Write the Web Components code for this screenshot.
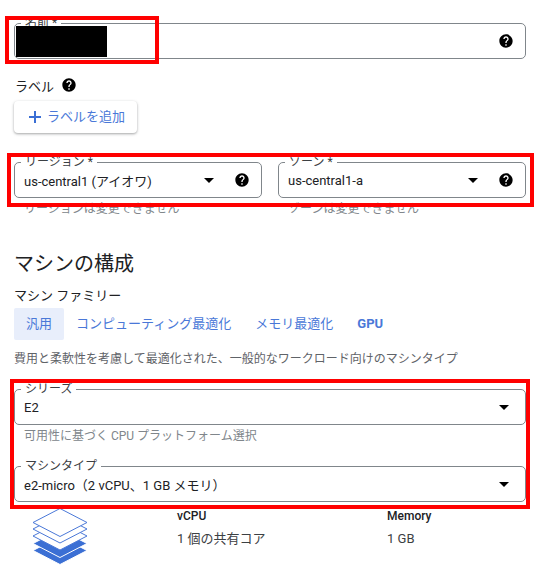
<!DOCTYPE html>
<html lang="ja">
<head>
<meta charset="utf-8">
<style>
  html, body { margin: 0; background: #fff; }
  body { font-family: Roboto, "Noto Sans CJK JP", sans-serif; color: #202124; }
</style>
</head>
<body>
<machine-form>
  <form-field label="名前 *" help></form-field>

  <form-label slot="labels" help>ラベル</form-label>
  <add-button slot="labels">ラベルを追加</add-button>

  <form-field slot="region" label="リージョン *" value="us-central1 (アイオワ)" arrow help hint="リージョンは変更できません"></form-field>
  <form-field slot="region" label="ゾーン *" value="us-central1-a" arrow help hint="ゾーンは変更できません"></form-field>

  <family-tabs slot="machine"></family-tabs>

  <form-field slot="series" label="シリーズ" value="E2" arrow hint="可用性に基づく CPU プラットフォーム選択"></form-field>
  <form-field slot="series" label="マシンタイプ" value="e2-micro（2 vCPU、1 GB メモリ）" arrow></form-field>

  <machine-summary slot="summary"></machine-summary>

  <red-box slot="overlay" style="left:5px;top:16px;width:154px;height:48px"></red-box>
  <red-box slot="overlay" style="left:7px;top:153px;width:527px;height:54px"></red-box>
  <red-box slot="overlay" style="left:10px;top:379px;width:520px;height:130px"></red-box>
  <black-out slot="overlay" style="left:16px;top:26px;width:91px;height:31px"></black-out>
</machine-form>

<script>
const HELP_ICON = `<svg width="16" height="16" viewBox="0 0 24 24" fill="#000"><path d="M12 2C6.48 2 2 6.48 2 12s4.48 10 10 10 10-4.48 10-10S17.52 2 12 2zm1 17h-2v-2h2v2zm2.07-7.75l-.9.92C13.45 12.9 13 13.5 13 15h-2v-.5c0-1.1.45-2.1 1.17-2.83l1.24-1.26c.37-.36.59-.86.59-1.41 0-1.1-.9-2-2-2s-2 .9-2 2H8c0-2.21 1.79-4 4-4s4 1.79 4 4c0 .88-.36 1.68-.93 2.25z"/></svg>`;

class MachineForm extends HTMLElement {
  constructor() {
    super();
    this.attachShadow({ mode: "open" });
    this.shadowRoot.innerHTML = /* html */`
      <style>
        :host {
          display: block;
          position: relative;
          width: 553px;
          height: 569px;
          overflow: hidden;
          box-sizing: border-box;
          padding: 23px 27px 0 14px;
        }
        .labels { display: flex; flex-direction: column; align-items: flex-start; gap: 7px; margin-top: 17px; }
        .region { display: grid; grid-template-columns: 248px 248px; gap: 16px; margin-top: 29px; }
        h2 { font-size: 20px; font-weight: 400; line-height: 28px; margin: 33px 0 0; }
        .machine { margin-top: 9px; }
        .series { display: flex; flex-direction: column; gap: 22px; margin-top: 22px; }
        .summary { margin-top: 6px; }
      </style>
      <slot></slot>
      <div class="labels"><slot name="labels"></slot></div>
      <div class="region"><slot name="region"></slot></div>
      <h2>マシンの構成</h2>
      <div class="machine"><slot name="machine"></slot></div>
      <div class="series"><slot name="series"></slot></div>
      <div class="summary"><slot name="summary"></slot></div>
      <slot name="overlay"></slot>`;
  }
}

class FormField extends HTMLElement {
  constructor() {
    super();
    this.attachShadow({ mode: "open" });
  }

  connectedCallback() {
    const label = this.getAttribute("label") || "";
    const value = this.getAttribute("value") || "";
    const hint = this.getAttribute("hint");
    this.shadowRoot.innerHTML = /* html */`
      <style>
        :host { display: block; position: relative; }
        .box {
          display: flex;
          align-items: center;
          gap: 20px;
          height: 36px;
          box-sizing: border-box;
          border: 1px solid #80868b;
          border-radius: 5px;
          padding: 0 11px 0 9px;
          font-size: 13px;
        }
        .value { flex: 1; white-space: nowrap; }
        .label {
          position: absolute;
          left: 7px;
          top: -8px;
          padding: 0 4px;
          background: #fff;
          font-size: 12px;
          line-height: 16px;
          color: #3c4043;
        }
        .arrow { width: 0; height: 0; border: 5px solid transparent; border-top-color: #000; border-bottom: 0; }
        .arrow:last-child { margin-right: 5px; }
        svg { display: block; }
        .hint { font-size: 12px; line-height: 16px; color: #80868b; padding: 3px 0 0 10px; }
      </style>
      <div class="box">
        <span class="value">${value}</span>
        ${this.hasAttribute("arrow") ? `<span class="arrow"></span>` : ""}
        ${this.hasAttribute("help") ? HELP_ICON : ""}
      </div>
      <span class="label">${label}</span>
      ${hint ? `<div class="hint">${hint}</div>` : ""}`;
  }
}

class FormLabel extends HTMLElement {
  constructor() {
    super();
    this.attachShadow({ mode: "open" });
    this.shadowRoot.innerHTML = /* html */`
      <style>
        :host { display: flex; align-items: center; gap: 7px; height: 18px; font-size: 13px; padding-left: 1px; }
      </style>
      <slot></slot>${HELP_ICON}`;
  }
}

class AddButton extends HTMLElement {
  constructor() {
    super();
    this.attachShadow({ mode: "open" });
    this.shadowRoot.innerHTML = /* html */`
      <style>
        :host {
          display: inline-flex;
          align-items: center;
          gap: 5px;
          height: 32px;
          box-sizing: border-box;
          padding: 0 12px 0 14px;
          border-radius: 4px;
          background: #fff;
          color: #4a78d8;
          font-size: 13px;
          box-shadow: 0 1px 3px rgba(60, 64, 67, .35), 0 1px 2px rgba(60, 64, 67, .15);
        }
        svg { display: block; }
        span { margin-bottom: 3px; }
      </style>
      <svg width="14" height="14" viewBox="0 0 14 14" fill="#3b6fd4"><path d="M6 1h2v5h5v2H8v5H6V8H1V6h5z"/></svg>
      <span><slot></slot></span>`;
  }
}

class FamilyTabs extends HTMLElement {
  constructor() {
    super();
    this.attachShadow({ mode: "open" });
    this.shadowRoot.innerHTML = /* html */`
      <style>
        :host { display: block; }
        .title { font-size: 13px; line-height: 18px; }
        .tabs { display: flex; margin-top: 3px; }
        .tab { padding: 0 12px; height: 32px; line-height: 32px; font-size: 13px; color: #4a78d8; border-radius: 2px; }
        .tab.on { background: #e8eefb; }
        .tab.gpu { font-weight: 700; }
        .desc { font-size: 12px; line-height: 16px; color: #5f6368; margin-top: 11px; white-space: nowrap; }
      </style>
      <div class="title">マシン ファミリー</div>
      <div class="tabs">
        <div class="tab on">汎用</div>
        <div class="tab">コンピューティング最適化</div>
        <div class="tab">メモリ最適化</div>
        <div class="tab gpu">GPU</div>
      </div>
      <div class="desc">費用と柔軟性を考慮して最適化された、一般的なワークロード向けのマシンタイプ</div>`;
  }
}

class MachineSummary extends HTMLElement {
  constructor() {
    super();
    this.attachShadow({ mode: "open" });
    const layer = (y, fill) => `<path d="M28 ${y}L55 ${y + 14}L28 ${y + 28}L1 ${y + 14}Z" fill="${fill}" stroke="${fill === "#fff" ? "#4a78d8" : "#fff"}" stroke-width="1"/>`;
    this.shadowRoot.innerHTML = /* html */`
      <style>
        :host { display: grid; grid-template-columns: 145px 210px 1fr; grid-template-rows: 16px 24px; font-size: 13px; padding-left: 18px; }
        svg { display: block; grid-row: span 2; }
        .head { font-size: 12px; font-weight: 500; line-height: 16px; }
        .cell { line-height: 18px; padding-top: 6px; color: #3c4043; }
      </style>
      <svg width="58" height="60" viewBox="0 0 58 60">
        ${layer(28.5, "#3b6fd4")}${layer(21.5, "#3b6fd4")}${layer(14, "#fff")}${layer(7, "#fff")}${layer(0.5, "#fff")}
      </svg>
      <div class="head">vCPU</div>
      <div class="head">Memory</div>
      <div class="cell">1 個の共有コア</div>
      <div class="cell">1 GB</div>`;
  }
}

class RedBox extends HTMLElement {
  constructor() {
    super();
    this.attachShadow({ mode: "open" });
    this.shadowRoot.innerHTML = `<style>:host { display: block; position: absolute; box-sizing: border-box; border: 4px solid #f00; }</style>`;
  }
}

class BlackOut extends HTMLElement {
  constructor() {
    super();
    this.attachShadow({ mode: "open" });
    this.shadowRoot.innerHTML = `<style>:host { display: block; position: absolute; background: #000; }</style>`;
  }
}

customElements.define("machine-form", MachineForm);
customElements.define("form-field", FormField);
customElements.define("form-label", FormLabel);
customElements.define("add-button", AddButton);
customElements.define("family-tabs", FamilyTabs);
customElements.define("machine-summary", MachineSummary);
customElements.define("red-box", RedBox);
customElements.define("black-out", BlackOut);
</script>
</body>
</html>
